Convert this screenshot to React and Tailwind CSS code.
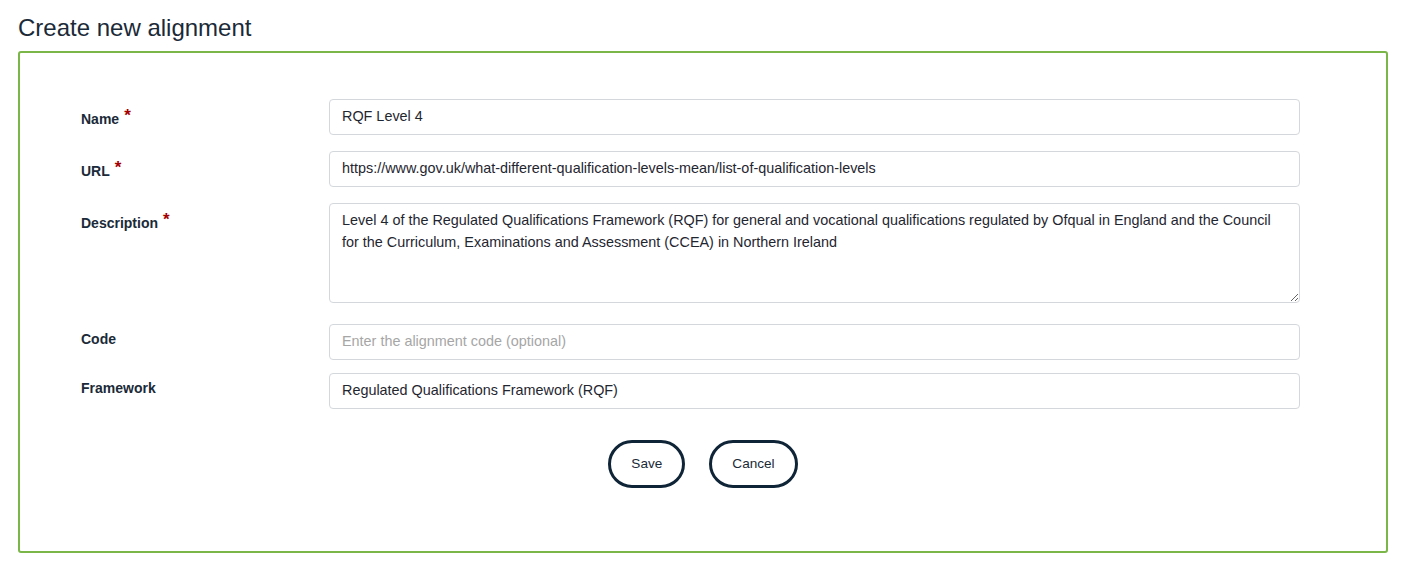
import React from "react";

function Label({ children, required, pt }) {
  return (
    <div className={`${pt} text-[14px] leading-[20px] font-bold text-[#1b2a38]`}>
      {children}
      {required && (
        <span className="ml-[5px] text-[#a30000] text-[17px] leading-[10px] relative top-[-3px]">*</span>
      )}
    </div>
  );
}

const inputCls =
  "w-full h-[36px] px-3 pb-[2px] border border-[#d4d7db] rounded-[4px] text-[14.4px] text-[#1f2630] bg-white outline-none placeholder:text-[#a6a6a6]";

export default function App() {
  return (
    <div className="w-[1404px] h-[570px] bg-white font-['Liberation_Sans',Arial,sans-serif] px-[18px] pt-[14px] box-border">
      <h1 className="text-[24px] leading-[28px] font-normal text-[#1b2a38] mb-[9px]">Create new alignment</h1>
      <div className="w-[1370px] h-[502px] border-2 border-[#7ab648] rounded-[3px] box-border pt-[46px] pl-[61px] pr-[86px]">
        <div className="flex">
          <div className="w-[248px]"><Label required pt="pt-[10px]">Name</Label></div>
          <div className="flex-1">
            <input className={inputCls} defaultValue="RQF Level 4" />
          </div>
        </div>
        <div className="flex mt-[16px]">
          <div className="w-[248px]"><Label required pt="pt-[10px]">URL</Label></div>
          <div className="flex-1">
            <input
              className={inputCls}
              defaultValue="https://www.gov.uk/what-different-qualification-levels-mean/list-of-qualification-levels"
            />
          </div>
        </div>
        <div className="flex mt-[16px]">
          <div className="w-[248px]"><Label required pt="pt-[10px]">Description</Label></div>
          <div className="flex-1 flex">
            <textarea
              className="w-full h-[100px] px-3 py-[5px] border border-[#d4d7db] rounded-[4px] text-[14.4px] leading-[22px] text-[#1f2630] bg-white outline-none block"
              defaultValue="Level 4 of the Regulated Qualifications Framework (RQF) for general and vocational qualifications regulated by Ofqual in England and the Council for the Curriculum, Examinations and Assessment (CCEA) in Northern Ireland"
            />
          </div>
        </div>
        <div className="flex mt-[21px]">
          <div className="w-[248px]"><Label pt="pt-[5px]">Code</Label></div>
          <div className="flex-1">
            <input className={inputCls} placeholder="Enter the alignment code (optional)" />
          </div>
        </div>
        <div className="flex mt-[13px]">
          <div className="w-[248px]"><Label pt="pt-[5px]">Framework</Label></div>
          <div className="flex-1">
            <input className={inputCls} defaultValue="Regulated Qualifications Framework (RQF)" />
          </div>
        </div>
        <div className="flex justify-center gap-[24px] mt-[31px] ml-[-61px] mr-[-86px]">
          <button className="h-[48px] px-5 border-[3px] border-[#0f2537] rounded-full bg-white text-[13.6px] text-[#1b2a38]">
            Save
          </button>
          <button className="h-[48px] px-5 border-[3px] border-[#0f2537] rounded-full bg-white text-[13.6px] text-[#1b2a38]">
            Cancel
          </button>
        </div>
      </div>
    </div>
  );
}
